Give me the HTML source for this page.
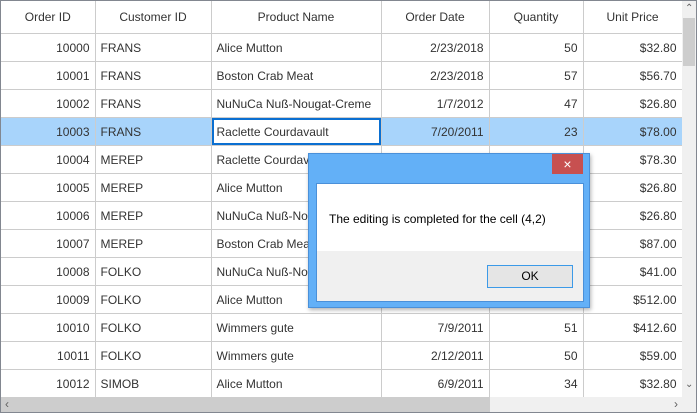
<!DOCTYPE html>
<html><head><style>
body{margin:0;width:697px;height:413px;overflow:hidden;background:#fff;font-family:"Liberation Sans",sans-serif;font-size:12px;color:#333}
.g{position:absolute;left:0;top:0;width:695px;height:411px;border:1px solid #828790;overflow:hidden}
table{border-collapse:collapse;position:absolute;left:0;top:0;table-layout:fixed;width:681px;font-size:12px}
td,th{height:27px;border-right:1px solid #ccc;border-bottom:1px solid #ccc;padding:0 5px;white-space:nowrap;overflow:hidden;font-weight:normal;box-sizing:content-box}
th{height:32px;text-align:center;color:#333}
.r{text-align:right}
tr.s td{background:#a8d4fb}
</style></head><body>
<div class="g">
<table>
<colgroup><col style="width:94px"><col style="width:116px"><col style="width:170px"><col style="width:108px"><col style="width:94px"><col style="width:99px"></colgroup>
<tr><th>Order ID</th><th>Customer ID</th><th>Product Name</th><th>Order Date</th><th>Quantity</th><th>Unit Price</th></tr>
<tr><td class="r">10000</td><td>FRANS</td><td>Alice Mutton</td><td class="r">2/23/2018</td><td class="r">50</td><td class="r">$32.80</td></tr>
<tr><td class="r">10001</td><td>FRANS</td><td>Boston Crab Meat</td><td class="r">2/23/2018</td><td class="r">57</td><td class="r">$56.70</td></tr>
<tr><td class="r">10002</td><td>FRANS</td><td>NuNuCa Nuß-Nougat-Creme</td><td class="r">1/7/2012</td><td class="r">47</td><td class="r">$26.80</td></tr>
<tr class="s"><td class="r">10003</td><td>FRANS</td><td style="background:#fff;box-shadow:inset 0 0 0 2px #0a6fd1">Raclette Courdavault</td><td class="r">7/20/2011</td><td class="r">23</td><td class="r">$78.00</td></tr>
<tr><td class="r">10004</td><td>MEREP</td><td>Raclette Courdavault</td><td class="r"></td><td class="r"></td><td class="r">$78.30</td></tr>
<tr><td class="r">10005</td><td>MEREP</td><td>Alice Mutton</td><td></td><td></td><td class="r">$26.80</td></tr>
<tr><td class="r">10006</td><td>MEREP</td><td>NuNuCa Nuß-Nougat-Creme</td><td></td><td></td><td class="r">$26.80</td></tr>
<tr><td class="r">10007</td><td>MEREP</td><td>Boston Crab Meat</td><td></td><td></td><td class="r">$87.00</td></tr>
<tr><td class="r">10008</td><td>FOLKO</td><td>NuNuCa Nuß-Nougat-Creme</td><td></td><td></td><td class="r">$41.00</td></tr>
<tr><td class="r">10009</td><td>FOLKO</td><td>Alice Mutton</td><td></td><td></td><td class="r">$512.00</td></tr>
<tr><td class="r">10010</td><td>FOLKO</td><td>Wimmers gute</td><td class="r">7/9/2011</td><td class="r">51</td><td class="r">$412.60</td></tr>
<tr><td class="r">10011</td><td>FOLKO</td><td>Wimmers gute</td><td class="r">2/12/2011</td><td class="r">50</td><td class="r">$59.00</td></tr>
<tr><td class="r">10012</td><td>SIMOB</td><td>Alice Mutton</td><td class="r">6/9/2011</td><td class="r">34</td><td class="r">$32.80</td></tr>
</table>
<div style="position:absolute;left:681px;top:0;width:14px;height:396px;background:#f0f0f0"></div>
<div style="position:absolute;left:682px;top:17px;width:12px;height:48px;background:#cdcdcd"></div>
<div style="position:absolute;left:684px;top:2px;font-size:10px;color:#606060">&#8963;</div>
<div style="position:absolute;left:684px;top:378px;font-size:10px;color:#606060">&#8964;</div>
<div style="position:absolute;left:0;top:396px;width:695px;height:15px;background:#f0f0f0"></div>
<div style="position:absolute;left:0;top:396px;width:489px;height:15px;background:#cdcdcd"></div>
<div style="position:absolute;left:4px;top:396px;font-size:12px;color:#606060">&lsaquo;</div>
<div style="position:absolute;left:673px;top:396px;font-size:12px;color:#606060">&rsaquo;</div>
</div>
<div style="position:absolute;left:308px;top:153px;width:280px;height:153px;background:#63b0f7;border:1px solid #4a90d9;box-shadow:1px 2px 4px rgba(0,0,0,.3)">
<div style="position:absolute;left:243px;top:0;width:31px;height:20px;background:#c75050;color:#fff;text-align:center;font-size:14px;line-height:20px">&#215;</div>
<div style="position:absolute;left:7px;top:29px;width:266px;height:117px;background:#f0f0f0;border:1px solid #4a90d9">
<div style="height:67px;background:#fff;color:#000;padding:28px 0 0 12px;box-sizing:border-box;font-size:12px">The editing is completed for the cell (4,2)</div>
<div style="position:absolute;left:170px;top:81px;width:84px;height:21px;border:1px solid #3c9ae8;background:#e5e5e5;text-align:center;line-height:21px;color:#000">OK</div>
</div></div>
</body></html>
